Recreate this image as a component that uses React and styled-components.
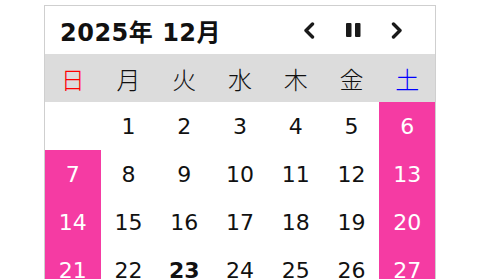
import React from "react";
import styled, { createGlobalStyle } from "styled-components";

const GlobalStyle = createGlobalStyle`
  html, body {
    margin: 0;
    padding: 0;
    background: #fff;
  }
  body {
    font-family: "DejaVu Sans", "Noto Sans CJK JP", sans-serif;
  }
`;

const Calendar = styled.div`
  width: 390px;
  margin: 5px auto 0;
  border: 1px solid #cfcfcf;
  background: #fff;
`;

const Header = styled.div`
  height: 48px;
  display: flex;
  align-items: center;
  justify-content: space-between;
  padding: 0 16px 0 15px;
`;

const Title = styled.h2`
  margin: 0;
  font-size: 24px;
  font-weight: bold;
  letter-spacing: 0.5px;
  color: #111;
  font-family: "DejaVu Sans", "Noto Sans CJK JP", sans-serif;
`;

const Nav = styled.div`
  display: flex;
  align-items: center;
`;

const NavButton = styled.button`
  width: 44px;
  height: 40px;
  border: none;
  background: none;
  padding: 0;
  display: flex;
  align-items: center;
  justify-content: center;
  color: #1a1a1a;
  cursor: pointer;
`;

const Grid = styled.div`
  display: grid;
  grid-template-columns: repeat(7, 1fr);
`;

const WeekRow = styled(Grid)`
  background: #dcdcdc;
`;

const WeekDay = styled.div`
  height: 48px;
  display: flex;
  align-items: center;
  justify-content: center;
  font-size: 24px;
  font-family: "Noto Sans CJK JP", sans-serif;
  font-weight: 300;
  color: ${(p) => (p.$dow === 0 ? "#ff0000" : p.$dow === 6 ? "#0000ff" : "#111")};
`;

const Day = styled.div`
  height: 48px;
  display: flex;
  align-items: center;
  justify-content: center;
  font-size: 22px;
  font-weight: ${(p) => (p.$today ? "bold" : "normal")};
  color: ${(p) => (p.$holiday ? "#fff" : "#111")};
  background: ${(p) => (p.$holiday ? "#f53ba3" : "transparent")};
`;

const weekdays = ["日", "月", "火", "水", "木", "金", "土"];

function buildCells(year, month) {
  const first = new Date(year, month - 1, 1).getDay();
  const days = new Date(year, month, 0).getDate();
  const cells = [];
  for (let i = 0; i < first; i++) cells.push(null);
  for (let d = 1; d <= days; d++) cells.push(d);
  while (cells.length % 7) cells.push(null);
  return cells;
}

function Chevron({ dir }) {
  const pts = dir === "left" ? "9.5,2 3,8.5 9.5,15" : "2.5,2 9,8.5 2.5,15";
  return (
    <svg width="12" height="17" viewBox="0 0 12 17">
      <polyline points={pts} fill="none" stroke="currentColor" strokeWidth="3.4" strokeLinecap="round" strokeLinejoin="round" />
    </svg>
  );
}

function PauseIcon() {
  return (
    <svg width="15" height="14" viewBox="0 0 15 14">
      <rect x="0" y="0" width="5.5" height="14" rx="1" fill="currentColor" />
      <rect x="9" y="0" width="5.5" height="14" rx="1" fill="currentColor" />
    </svg>
  );
}

export default function App() {
  const cells = buildCells(2025, 12);
  const today = 23;

  return (
    <>
      <GlobalStyle />
      <Calendar>
        <Header>
          <Title>2025年 12月</Title>
          <Nav>
            <NavButton aria-label="前月">
              <Chevron dir="left" />
            </NavButton>
            <NavButton aria-label="一時停止">
              <PauseIcon />
            </NavButton>
            <NavButton aria-label="翌月">
              <Chevron dir="right" />
            </NavButton>
          </Nav>
        </Header>
        <WeekRow>
          {weekdays.map((w, i) => (
            <WeekDay key={w} $dow={i}>
              {w}
            </WeekDay>
          ))}
        </WeekRow>
        <Grid>
          {cells.map((d, i) => {
            const dow = i % 7;
            const holiday = d !== null && (dow === 0 || dow === 6);
            return (
              <Day key={i} $holiday={holiday} $today={d === today}>
                {d}
              </Day>
            );
          })}
        </Grid>
      </Calendar>
    </>
  );
}
